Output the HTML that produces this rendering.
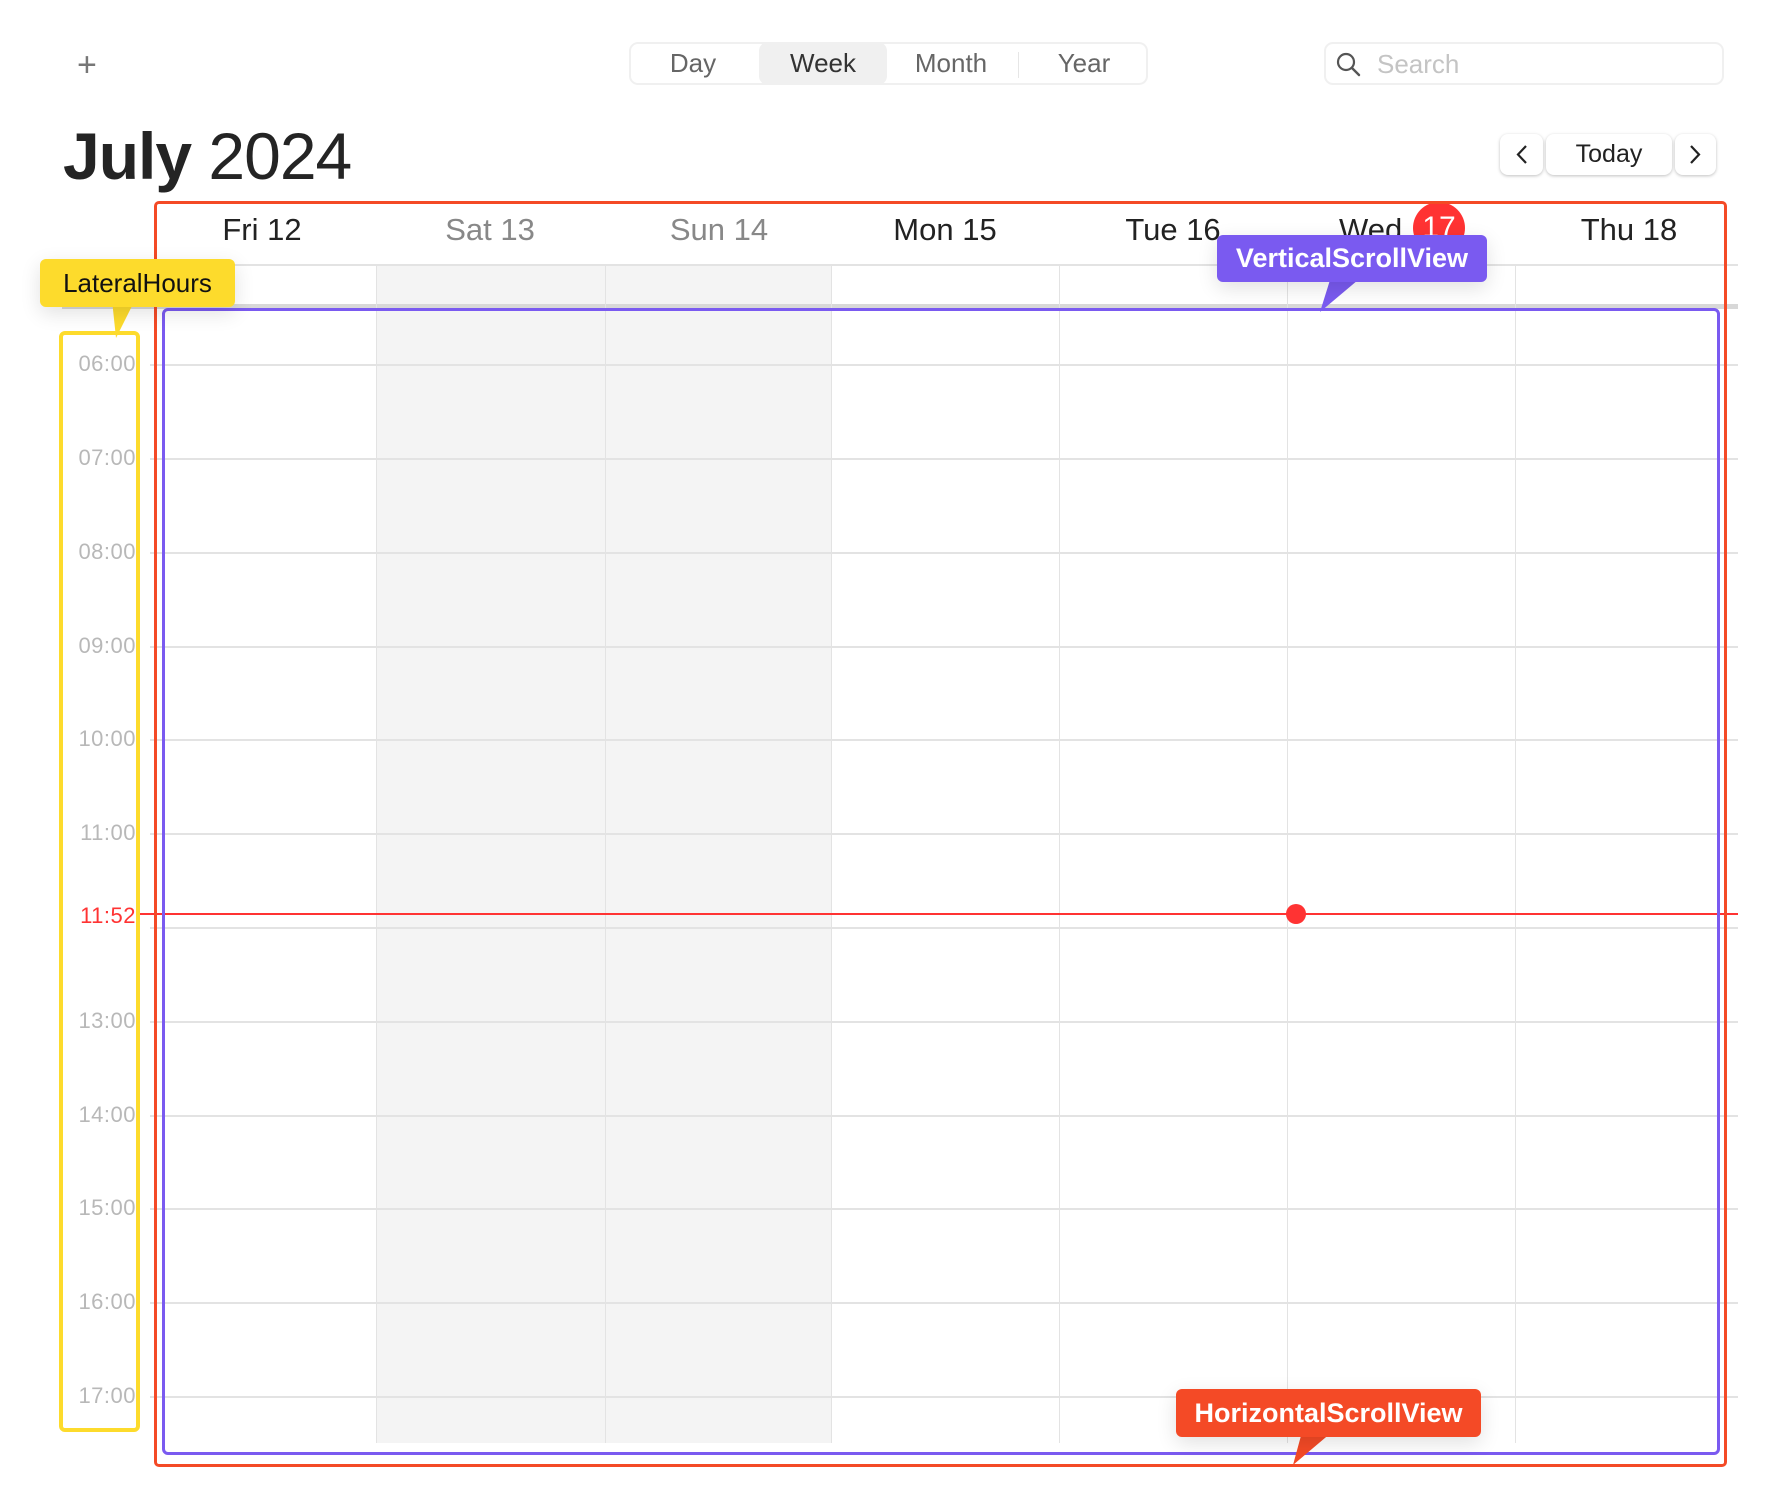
<!DOCTYPE html><html><head><meta charset="utf-8"><style>
*{box-sizing:border-box;margin:0;padding:0}
body{width:1772px;height:1506px;background:#fff;position:relative;overflow:hidden;font-family:"Liberation Sans",sans-serif}
.a{position:absolute}
.hl{position:absolute;left:150px;width:1588px;height:2px;background:#e3e3e3}
.vl{position:absolute;top:265px;width:1px;height:1178px;background:#e3e3e3}
.hr{position:absolute;left:56px;width:80px;text-align:right;font-size:22px;letter-spacing:0.5px;color:#b8b8b8}
.day{position:absolute;top:212px;width:228px;text-align:center;font-size:31px;color:#222}
.seg{position:absolute;top:43px;height:41px;line-height:41px;font-size:26px;color:#666;text-align:center}
</style></head><body>
<div class="a" style="left:77px;top:46px;font-size:34px;color:#777;font-weight:300">+</div>
<div class="a" style="left:629px;top:42px;width:519px;height:43px;border:2px solid #f0f0f0;border-radius:9px"></div>
<div class="a" style="left:759px;top:42px;width:128px;height:43px;background:#f0f0f0;border-radius:9px"></div>
<div class="a" style="left:1018px;top:52px;width:1px;height:26px;background:#e6e6e6"></div>
<div class="seg" style="left:638px;width:110px">Day</div>
<div class="seg" style="left:759px;width:128px;color:#333">Week</div>
<div class="seg" style="left:887px;width:128px">Month</div>
<div class="seg" style="left:1020px;width:128px">Year</div>
<div class="a" style="left:1324px;top:42px;width:400px;height:43px;border:2px solid #f0f0f0;border-radius:9px"></div>
<svg class="a" style="left:1335px;top:51px" width="28" height="28" viewBox="0 0 28 28"><circle cx="11" cy="11" r="8" fill="none" stroke="#555" stroke-width="2.2"/><path d="M17 17l7 7" stroke="#555" stroke-width="2.4" stroke-linecap="round"/></svg>
<div class="a" style="left:1377px;top:49px;font-size:26px;color:#c4c4c4">Search</div>
<div class="a" style="left:63px;top:118px;font-size:66px;color:#242424;letter-spacing:-1px"><b>July</b> 2024</div>
<div class="a" style="left:1500px;top:134px;width:43px;height:41px;border-radius:8px;box-shadow:0 1px 3px rgba(0,0,0,.25);background:#fff"></div>
<div class="a" style="left:1546px;top:134px;width:126px;height:41px;border-radius:8px;box-shadow:0 1px 3px rgba(0,0,0,.25);background:#fff;text-align:center;line-height:41px;font-size:25px;color:#222">Today</div>
<div class="a" style="left:1675px;top:134px;width:41px;height:41px;border-radius:8px;box-shadow:0 1px 3px rgba(0,0,0,.25);background:#fff"></div>
<svg class="a" style="left:1500px;top:134px" width="43" height="41"><path d="M26 12l-8 8.5 8 8.5" fill="none" stroke="#222" stroke-width="2.2"/></svg>
<svg class="a" style="left:1675px;top:134px" width="41" height="41"><path d="M16 12l8 8.5-8 8.5" fill="none" stroke="#222" stroke-width="2.2"/></svg>
<div class="a" style="left:376px;top:265px;width:455px;height:1178px;background:#f4f4f4"></div>
<div class="a" style="left:150px;top:264px;width:1588px;height:2px;background:#e3e3e3"></div>
<div class="a" style="left:62px;top:304px;width:1676px;height:5px;background:#d8d8d8"></div>
<div class="vl" style="left:376px"></div><div class="vl" style="left:605px"></div><div class="vl" style="left:831px"></div><div class="vl" style="left:1059px"></div><div class="vl" style="left:1287px"></div><div class="vl" style="left:1515px"></div>
<div class="hl" style="top:364px"></div><div class="hl" style="top:458px"></div><div class="hl" style="top:552px"></div><div class="hl" style="top:646px"></div><div class="hl" style="top:739px"></div><div class="hl" style="top:833px"></div><div class="hl" style="top:927px"></div><div class="hl" style="top:1021px"></div><div class="hl" style="top:1115px"></div><div class="hl" style="top:1208px"></div><div class="hl" style="top:1302px"></div><div class="hl" style="top:1396px"></div>
<div class="hr" style="top:351px">06:00</div><div class="hr" style="top:445px">07:00</div><div class="hr" style="top:539px">08:00</div><div class="hr" style="top:633px">09:00</div><div class="hr" style="top:726px">10:00</div><div class="hr" style="top:820px">11:00</div><div class="hr" style="top:903px;color:#f33">11:52</div><div class="hr" style="top:1008px">13:00</div><div class="hr" style="top:1102px">14:00</div><div class="hr" style="top:1195px">15:00</div><div class="hr" style="top:1289px">16:00</div><div class="hr" style="top:1383px">17:00</div>
<div class="a" style="left:140px;top:913px;width:1598px;height:2px;background:#f33"></div>
<div class="a" style="left:1286px;top:904px;width:20px;height:20px;border-radius:50%;background:#f33"></div>
<div class="day" style="left:148px">Fri 12</div>
<div class="day" style="left:376px;color:#888">Sat 13</div>
<div class="day" style="left:605px;color:#888">Sun 14</div>
<div class="day" style="left:831px">Mon 15</div>
<div class="day" style="left:1059px">Tue 16</div>
<div class="day" style="left:1287px;text-align:left;padding-left:52px">Wed</div>
<div class="a" style="left:1413px;top:202px;width:52px;height:52px;border-radius:50%;background:#f33;color:#fff;font-size:30px;text-align:center;line-height:52px">17</div>
<div class="day" style="left:1515px">Thu 18</div>
<div class="a" style="left:154px;top:201px;width:1573px;height:1266px;border:3px solid #f44a26;border-radius:5px"></div>
<div class="a" style="left:162px;top:308px;height:1147px;border:3px solid #7a5af0;border-radius:6px;width:1558px"></div>
<div class="a" style="left:59px;top:331px;width:81px;height:1101px;border:4px solid #fddb2c;border-radius:6px"></div>
<svg class="a" style="left:0;top:0" width="1772" height="1506">
<path d="M112 300L135 300 116 338Z" fill="#fddb2c"/>
<path d="M1330 280L1358 280 1320 312Z" fill="#7a5af0"/>
<path d="M1302 1432L1332 1432 1293 1465Z" fill="#f44a26"/>
</svg>
<div class="a" style="left:40px;top:259px;width:195px;height:48px;background:#fddb2c;border-radius:6px;font-size:26px;color:#111;text-align:center;line-height:48px;box-shadow:0 6px 20px rgba(0,0,0,.12)">LateralHours</div>
<div class="a" style="left:1217px;top:235px;width:270px;height:47px;background:#7a5af0;border-radius:6px;font-size:27px;font-weight:bold;color:#fff;text-align:center;line-height:47px;box-shadow:0 6px 20px rgba(0,0,0,.12)">VerticalScrollView</div>
<div class="a" style="left:1176px;top:1389px;width:305px;height:48px;background:#f44a26;border-radius:6px;font-size:27px;font-weight:bold;color:#fff;text-align:center;line-height:48px;box-shadow:0 6px 20px rgba(0,0,0,.12)">HorizontalScrollView</div>
</body></html>
